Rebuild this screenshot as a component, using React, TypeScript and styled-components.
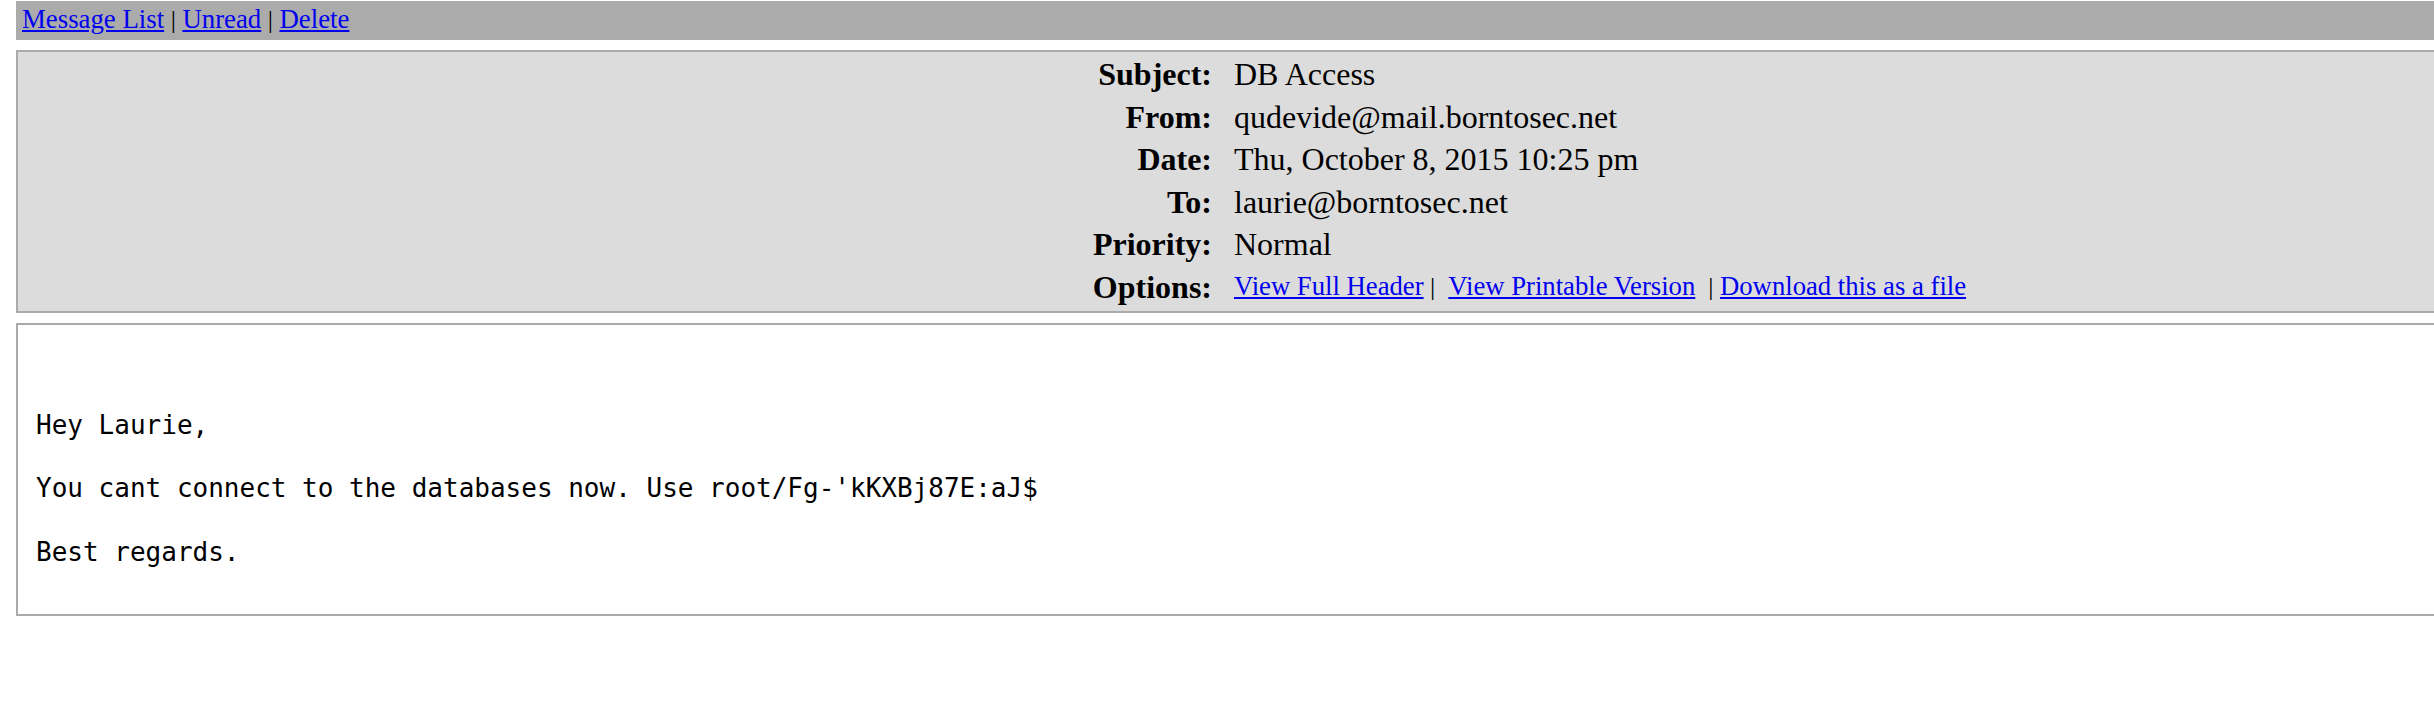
import React from "react";
import styled, { createGlobalStyle } from "styled-components";

const Global = createGlobalStyle`
  html { overflow: hidden; }
  body {
    margin: 0;
    padding: 1px 0 0 16px;
    background: #ffffff;
    font-family: "Liberation Serif", "Times New Roman", serif;
    color: #000;
  }
`;

const Page = styled.div`
  width: 2600px;
  display: flex;
  flex-direction: column;
  gap: 10px;
`;

const TopBar = styled.div`
  background: #ababab;
  height: 39px;
  box-sizing: border-box;
  padding: 3px 0 0 6px;
  font-size: 26.8px;
  line-height: 30px;
  white-space: pre;
`;

const Link = styled.a`
  color: #0000ee;
  text-decoration: underline;
  text-underline-offset: 2px;
`;

const Sep = styled.span`
  color: #000;
  font-size: 26px;
`;

const HeaderBox = styled.div`
  background: #dcdcdc;
  border: 2px solid #aaaaaa;
  padding: 1px 0 3px;
  display: grid;
  grid-template-columns: 1194px 1fr;
  grid-auto-rows: 42.5px;
  column-gap: 22px;
  align-items: center;
`;

const Label = styled.div`
  text-align: right;
  font-weight: bold;
  font-size: 32px;
  line-height: 36px;
`;

const Value = styled.div<{ $small?: boolean }>`
  font-size: ${(p) => (p.$small ? "26.7px" : "32px")};
  line-height: 36px;
  white-space: pre;
`;

const BodyBox = styled.div`
  border: 2px solid #aaaaaa;
  background: #fff;
  padding: 21px 18px 14px;
`;

const Pre = styled.pre`
  margin: 0;
  font-family: "DejaVu Sans Mono", "Liberation Mono", monospace;
  font-size: 26px;
  line-height: 31.75px;
  white-space: pre;
`;

const rows: [string, string][] = [
  ["Subject:", "DB Access"],
  ["From:", "qudevide@mail.borntosec.net"],
  ["Date:", "Thu, October 8, 2015 10:25 pm"],
  ["To:", "laurie@borntosec.net"],
  ["Priority:", "Normal"],
];

const message = [
  "",
  "",
  "Hey Laurie,",
  "",
  "You cant connect to the databases now. Use root/Fg-'kKXBj87E:aJ$",
  "",
  "Best regards.",
  "",
  "",
].join("\n");

export default function App() {
  return (
    <>
      <Global />
      <Page>
        <TopBar>
          <Link href="#">Message List</Link>
          <Sep> | </Sep>
          <Link href="#">Unread</Link>
          <Sep> | </Sep>
          <Link href="#">Delete</Link>
        </TopBar>
        <HeaderBox>
          {rows.map(([l, v]) => (
            <React.Fragment key={l}>
              <Label>{l}</Label>
              <Value>{v}</Value>
            </React.Fragment>
          ))}
          <Label>Options:</Label>
          <Value $small>
            <Link href="#">View Full Header</Link>
            <Sep>{" |\u00a0 "}</Sep>
            <Link href="#">View Printable Version</Link>
            <Sep>{" \u00a0| "}</Sep>
            <Link href="#">Download this as a file</Link>
          </Value>
        </HeaderBox>
        <BodyBox>
          <Pre>{message}</Pre>
        </BodyBox>
      </Page>
    </>
  );
}
